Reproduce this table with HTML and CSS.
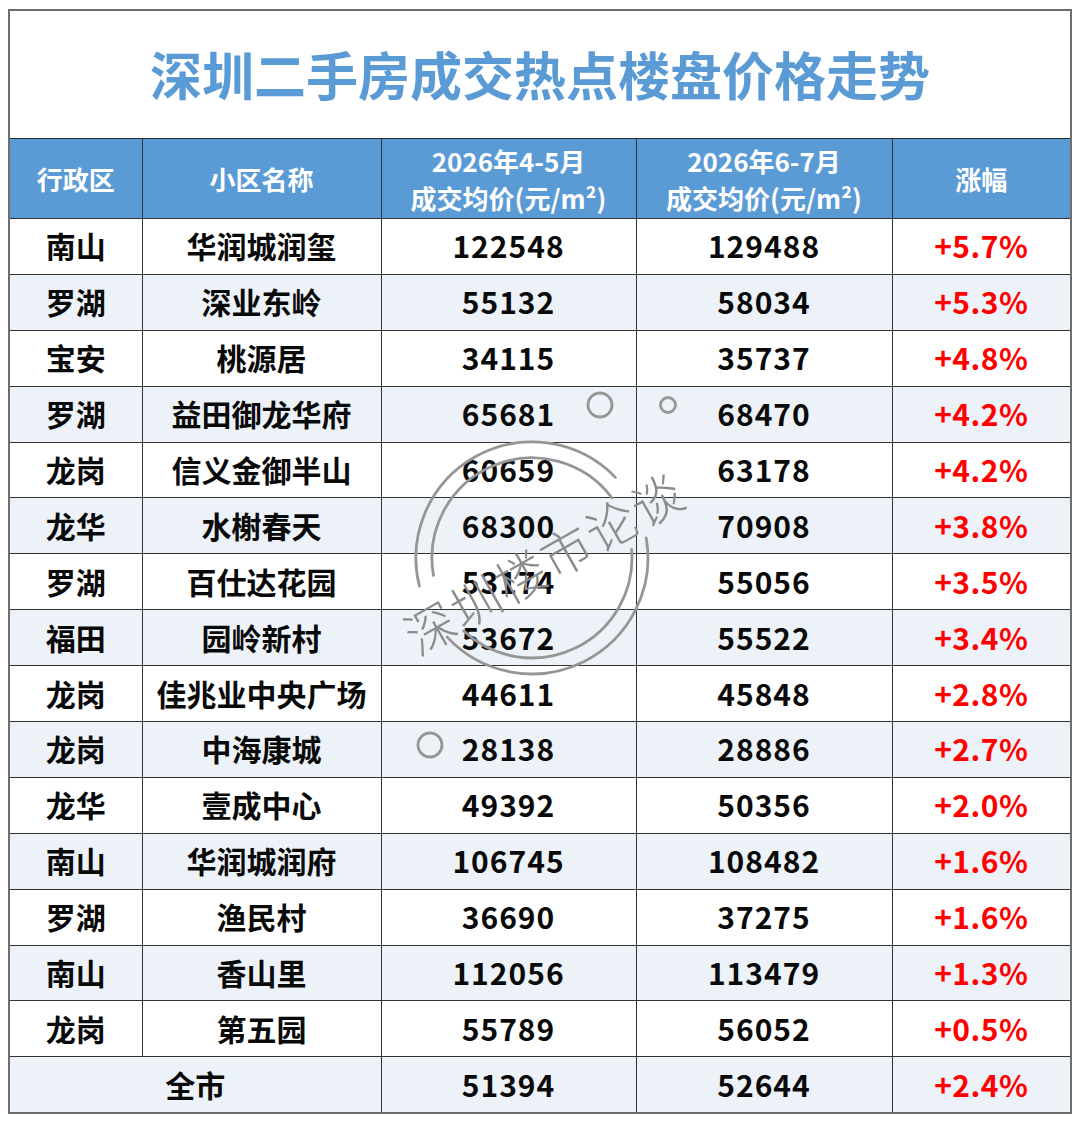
FILE: index.html
```html
<!DOCTYPE html>
<html lang="zh-CN">
<head>
<meta charset="utf-8">
<title>深圳二手房成交热点楼盘价格走势</title>
<link rel="stylesheet" href="styles.css">
</head>
<body>
<div class="sheet">
  <div class="title">深圳二手房成交热点楼盘价格走势</div>
  <table class="grid">
    <colgroup>
      <col class="c-district">
      <col class="c-name">
      <col class="c-p1">
      <col class="c-p2">
      <col class="c-rise">
    </colgroup>
    <thead>
      <tr>
        <th>行政区</th>
        <th>小区名称</th>
        <th>2026年4-5月<br>成交均价(元/m²)</th>
        <th>2026年6-7月<br>成交均价(元/m²)</th>
        <th>涨幅</th>
      </tr>
    </thead>
    <tbody>
      <tr><td>南山</td><td>华润城润玺</td><td class="num">122548</td><td class="num">129488</td><td class="rise">+5.7%</td></tr>
      <tr><td>罗湖</td><td>深业东岭</td><td class="num">55132</td><td class="num">58034</td><td class="rise">+5.3%</td></tr>
      <tr><td>宝安</td><td>桃源居</td><td class="num">34115</td><td class="num">35737</td><td class="rise">+4.8%</td></tr>
      <tr><td>罗湖</td><td>益田御龙华府</td><td class="num">65681</td><td class="num">68470</td><td class="rise">+4.2%</td></tr>
      <tr><td>龙岗</td><td>信义金御半山</td><td class="num">60659</td><td class="num">63178</td><td class="rise">+4.2%</td></tr>
      <tr><td>龙华</td><td>水榭春天</td><td class="num">68300</td><td class="num">70908</td><td class="rise">+3.8%</td></tr>
      <tr><td>罗湖</td><td>百仕达花园</td><td class="num">53174</td><td class="num">55056</td><td class="rise">+3.5%</td></tr>
      <tr><td>福田</td><td>园岭新村</td><td class="num">53672</td><td class="num">55522</td><td class="rise">+3.4%</td></tr>
      <tr><td>龙岗</td><td>佳兆业中央广场</td><td class="num">44611</td><td class="num">45848</td><td class="rise">+2.8%</td></tr>
      <tr><td>龙岗</td><td>中海康城</td><td class="num">28138</td><td class="num">28886</td><td class="rise">+2.7%</td></tr>
      <tr><td>龙华</td><td>壹成中心</td><td class="num">49392</td><td class="num">50356</td><td class="rise">+2.0%</td></tr>
      <tr><td>南山</td><td>华润城润府</td><td class="num">106745</td><td class="num">108482</td><td class="rise">+1.6%</td></tr>
      <tr><td>罗湖</td><td>渔民村</td><td class="num">36690</td><td class="num">37275</td><td class="rise">+1.6%</td></tr>
      <tr><td>南山</td><td>香山里</td><td class="num">112056</td><td class="num">113479</td><td class="rise">+1.3%</td></tr>
      <tr><td>龙岗</td><td>第五园</td><td class="num">55789</td><td class="num">56052</td><td class="rise">+0.5%</td></tr>
      <tr class="total"><td colspan="2">全市</td><td class="num">51394</td><td class="num">52644</td><td class="rise">+2.4%</td></tr>
    </tbody>
  </table>
  <svg class="watermark" width="1080" height="1121" viewBox="0 0 1080 1121" aria-hidden="true">
    <g fill="none" stroke="#969696" stroke-width="2.8" stroke-linecap="round">
      <path d="M615.4 477.4 A116 116 0 0 0 419.4 586.1"/>
      <path d="M447.2 637.1 A116 116 0 0 0 646.2 537.9"/>
      <path d="M611.9 497.8 A100 100 0 0 0 433.5 575.4"/>
      <path d="M463.8 631.1 A100 100 0 0 0 631.6 549.3"/>
      <circle cx="600" cy="405" r="12"/>
      <circle cx="668" cy="405" r="7.5"/>
      <circle cx="430" cy="745" r="12"/>
    </g>
    <text class="wm-text" x="543" y="561" text-anchor="middle" dominant-baseline="central" transform="rotate(-29.5 543 561)">深圳楼市论谈</text>
  </svg>
</div>
</body>
</html>
```

FILE: styles.css
```css
html, body {
  margin: 0;
  padding: 0;
  background: #ffffff;
}

body {
  font-family: "Noto Sans CJK SC", "Noto Sans", "Liberation Sans", sans-serif;
}

.sheet {
  position: relative;
  box-sizing: border-box;
  width: 1064px;
  height: 1105px;
  margin: 9px 0 0 8px;
  border: 2px solid #6e6e6e;
  background: #ffffff;
}

.title {
  box-sizing: border-box;
  height: 128px;
  display: flex;
  align-items: center;
  justify-content: center;
  padding-bottom: 2px;
  font-size: 52px;
  font-weight: 700;
  color: #5b9bd5;
  border-bottom: 1px solid #2b2b2b;
}

.grid {
  width: 1060px;
  border-collapse: collapse;
  table-layout: fixed;
  border-style: hidden;
}

.c-district { width: 132px; }
.c-name { width: 239px; }
.c-p1 { width: 255px; }
.c-p2 { width: 256px; }
.c-rise { width: 178px; }

.grid th,
.grid td {
  border: 1px solid #333333;
  padding: 0;
  text-align: center;
  vertical-align: middle;
  font-weight: 700;
}

.grid th {
  height: 79px;
  background: #5b9bd5;
  color: #ffffff;
  font-size: 26px;
  line-height: 37px;
}

.grid td {
  height: 52.9px;
  padding-bottom: 2px;
  font-size: 30px;
  line-height: 30px;
  color: #0a0a0a;
}

.grid td.num {
  letter-spacing: 1px;
}

.grid tbody tr:nth-child(even) td {
  background: #edf2f9;
}

.grid td.rise {
  color: #ff0000;
  letter-spacing: 0.5px;
}

.watermark {
  position: absolute;
  left: -10px;
  top: -11px;
  pointer-events: none;
}

.wm-text {
  font-family: "Noto Sans CJK SC", sans-serif;
  font-weight: 300;
  font-size: 50px;
  letter-spacing: 2px;
  fill: #8c8c8c;
}
```
